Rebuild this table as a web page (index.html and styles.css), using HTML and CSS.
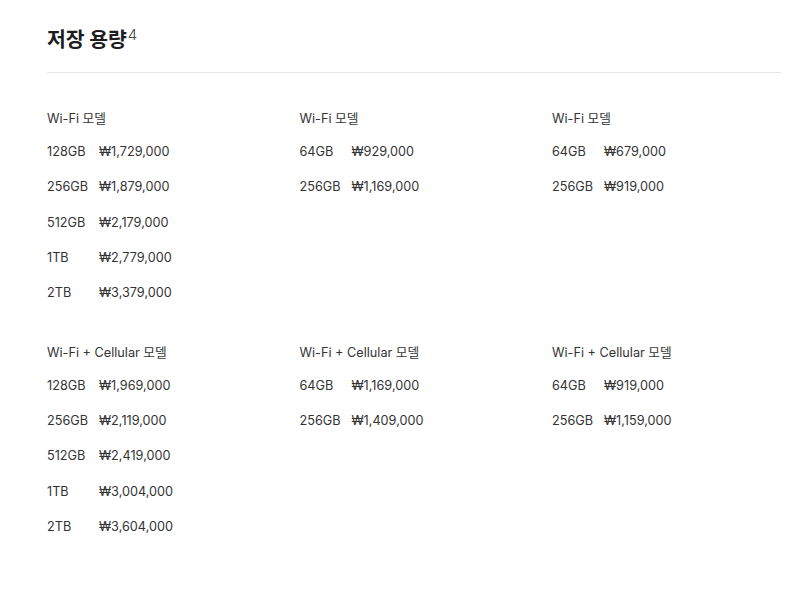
FILE: index.html
```html
<!DOCTYPE html>
<html lang="ko">
<head>
<meta charset="utf-8">
<link rel="stylesheet" href="styles.css">
</head>
<body>
<div class="page">
  <h2 class="title">저장 용량<sup class="fn">4</sup></h2>
  <div class="grid">
    <div class="col">
      <div class="head">Wi-Fi 모델</div>
      <div class="row"><span class="cap">128GB</span><span>₩1,729,000</span></div>
      <div class="row"><span class="cap">256GB</span><span>₩1,879,000</span></div>
      <div class="row"><span class="cap">512GB</span><span>₩2,179,000</span></div>
      <div class="row"><span class="cap">1TB</span><span>₩2,779,000</span></div>
      <div class="row"><span class="cap">2TB</span><span>₩3,379,000</span></div>
    </div>
    <div class="col">
      <div class="head">Wi-Fi 모델</div>
      <div class="row"><span class="cap">64GB</span><span>₩929,000</span></div>
      <div class="row"><span class="cap">256GB</span><span>₩1,169,000</span></div>
    </div>
    <div class="col">
      <div class="head">Wi-Fi 모델</div>
      <div class="row"><span class="cap">64GB</span><span>₩679,000</span></div>
      <div class="row"><span class="cap">256GB</span><span>₩919,000</span></div>
    </div>
    <div class="col">
      <div class="head">Wi-Fi + Cellular 모델</div>
      <div class="row"><span class="cap">128GB</span><span>₩1,969,000</span></div>
      <div class="row"><span class="cap">256GB</span><span>₩2,119,000</span></div>
      <div class="row"><span class="cap">512GB</span><span>₩2,419,000</span></div>
      <div class="row"><span class="cap">1TB</span><span>₩3,004,000</span></div>
      <div class="row"><span class="cap">2TB</span><span>₩3,604,000</span></div>
    </div>
    <div class="col">
      <div class="head">Wi-Fi + Cellular 모델</div>
      <div class="row"><span class="cap">64GB</span><span>₩1,169,000</span></div>
      <div class="row"><span class="cap">256GB</span><span>₩1,409,000</span></div>
    </div>
    <div class="col">
      <div class="head">Wi-Fi + Cellular 모델</div>
      <div class="row"><span class="cap">64GB</span><span>₩919,000</span></div>
      <div class="row"><span class="cap">256GB</span><span>₩1,159,000</span></div>
    </div>
  </div>
</div>
</body>
</html>
```
FILE: styles.css
```css
html, body {
  margin: 0;
  padding: 0;
  background: #fff;
}
body {
  font-family: Inter, "Noto Sans CJK KR", sans-serif;
  color: #1d1d1f;
}
.page {
  padding: 26px 0 0 47px;
  width: 734px;
}
.title {
  margin: 0;
  font-size: 20.5px;
  line-height: 28px;
  font-weight: 700;
  padding-bottom: 18px;
  border-bottom: 1px solid #e6e6e6;
  letter-spacing: -0.1px;
}
.fn {
  font-size: 15px;
  font-weight: 300;
  vertical-align: top;
  position: relative;
  top: 1px;
  margin-left: 1px;
  line-height: 1;
  color: #444;
}
.grid {
  display: grid;
  grid-template-columns: 252.5px 252.5px 1fr;
  row-gap: 23.5px;
  padding-top: 27px;
}
.col {
  display: flex;
  flex-direction: column;
}
.head, .row {
  height: 35.25px;
  line-height: 35.25px;
  font-size: 12.7px;
  color: #333;
}
.head {
  height: 34px;
  line-height: 37px;
}
.row {
  display: flex;
}
.cap {
  width: 52px;
  flex: none;
}
```
